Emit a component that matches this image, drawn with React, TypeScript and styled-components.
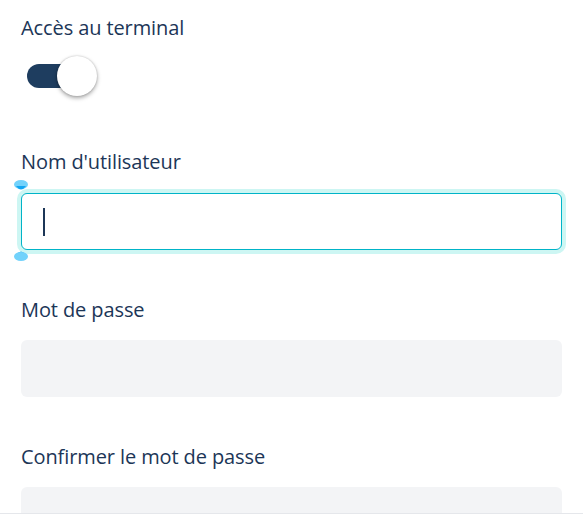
import styled, { createGlobalStyle } from "styled-components";

const GlobalStyle = createGlobalStyle`
  * { box-sizing: border-box; }
  body {
    margin: 0;
    background: #ffffff;
    font-family: "Open Sans", "Noto Sans", sans-serif;
  }
`;

const Page = styled.div`
  height: 529px;
  display: flex;
  flex-direction: column;
`;

const Scroll = styled.div`
  height: 514px;
  overflow: hidden;
  padding: 14px 21px 0 21px;
  border-bottom: 1px solid #e5e7eb;
  display: flex;
  flex-direction: column;
`;

const Group = styled.div<{ $gap: number; $after: number }>`
  display: flex;
  flex-direction: column;
  gap: ${p => p.$gap}px;
  margin-bottom: ${p => p.$after}px;
`;

const Label = styled.label`
  font-size: 20px;
  line-height: 28px;
  color: #1c3657;
  font-weight: 500;
  letter-spacing: -0.1px;
`;

const Switch = styled.button`
  position: relative;
  width: 76px;
  height: 40px;
  border: 0;
  padding: 0;
  background: transparent;
  cursor: pointer;
  display: flex;
  align-items: center;
`;

const Track = styled.span<{ $on: boolean }>`
  margin-left: 6px;
  width: 56px;
  height: 24px;
  border-radius: 12px;
  background: ${p => (p.$on ? "#1e3d5f" : "#cbd5e1")};
`;

const Knob = styled.span<{ $on: boolean }>`
  position: absolute;
  top: 0;
  left: ${p => (p.$on ? "36px" : "0")};
  width: 40px;
  height: 40px;
  border-radius: 50%;
  background: #ffffff;
  box-shadow: 0 2px 4px rgba(0, 0, 0, 0.35), 0 0 2px rgba(0, 0, 0, 0.2);
`;

const FieldWrap = styled.div`
  position: relative;
`;

const FocusedField = styled.div`
  height: 57px;
  border: 1px solid #00b4c8;
  border-radius: 6px;
  background: #ffffff;
  box-shadow: 0 0 0 4px #cdf6f3;
  display: flex;
  align-items: center;
  padding-left: 21px;
`;

const Caret = styled.span`
  width: 1.5px;
  height: 28px;
  background: #1c3657;
`;

const Input = styled.input`
  height: 57px;
  width: 100%;
  border: 0;
  border-radius: 6px;
  background: #f3f4f6;
  padding: 0 21px;
  font: inherit;
  font-size: 17px;
  outline: none;
`;

const Handle = styled.svg<{ $bottom?: boolean }>`
  position: absolute;
  left: -8px;
  width: 16px;
  height: 11px;
  ${p => (p.$bottom ? "bottom: -11px;" : "top: -13px;")}
`;

const Footer = styled.div`
  flex: 1;
  background: #ffffff;
`;

export default function App() {
  return (
    <>
      <GlobalStyle />
      <Page>
        <Scroll>
          <Group $gap={14} $after={52}>
            <Label>Accès au terminal</Label>
            <Switch role="switch" aria-checked="true">
              <Track $on />
              <Knob $on />
            </Switch>
          </Group>

          <Group $gap={17} $after={46}>
            <Label>Nom d'utilisateur</Label>
            <FieldWrap>
              <Handle viewBox="0 0 16 11">
                <ellipse cx="8" cy="4.5" rx="7" ry="4.5" fill="#72d2fb" />
                <path d="M3 6 Q8 13 13 6 Z" fill="#12a6f2" />
              </Handle>
              <FocusedField>
                <Caret />
              </FocusedField>
              <Handle $bottom viewBox="0 0 16 11">
                <path d="M3 5 Q8 -2 13 5 Z" fill="#12a6f2" />
                <ellipse cx="8" cy="6.5" rx="7" ry="4.5" fill="#72d2fb" />
              </Handle>
            </FieldWrap>
          </Group>

          <Group $gap={16} $after={46}>
            <Label>Mot de passe</Label>
            <Input type="password" />
          </Group>

          <Group $gap={16} $after={0}>
            <Label>Confirmer le mot de passe</Label>
            <Input type="password" />
          </Group>
        </Scroll>
        <Footer />
      </Page>
    </>
  );
}
